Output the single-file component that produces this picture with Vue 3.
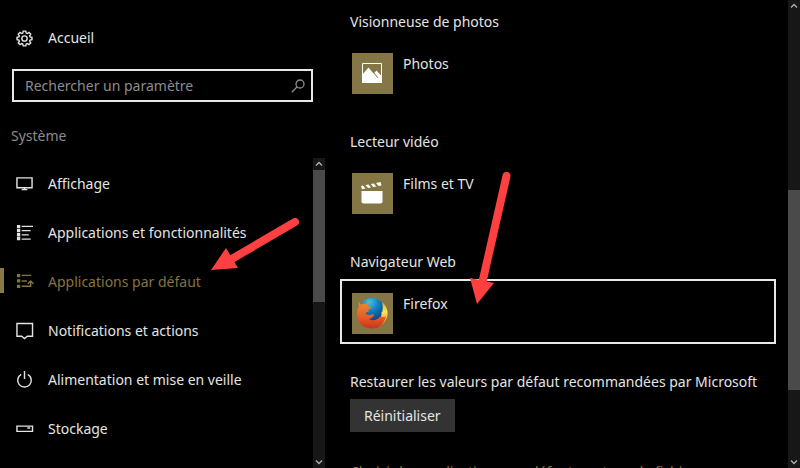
<template>
  <div class="settings">
    <aside class="sidebar">
      <a class="home" href="#accueil">
        <svg class="icon" viewBox="0 0 18 18" aria-hidden="true">
          <path class="line" d="M7.6 1.2h2.8l.4 2 1.1.5 1.8-1.2 1.9 1.9-1.2 1.8.5 1.1 2 .4v2.6l-2 .4-.5 1.1 1.2 1.8-1.9 1.9-1.8-1.2-1.1.5-.4 2H7.6l-.4-2-1.1-.5-1.8 1.2-1.9-1.9 1.2-1.8-.5-1.1-2-.4V7.7l2-.4.5-1.1-1.2-1.8 1.9-1.9 1.8 1.2 1.1-.5z" />
          <circle class="line" cx="9" cy="9" r="2.8" />
        </svg>
        <span>Accueil</span>
      </a>

      <label class="search">
        <input type="search" placeholder="Rechercher un paramètre" aria-label="Rechercher un paramètre" />
        <svg class="search__icon" viewBox="0 0 14 14" aria-hidden="true">
          <circle cx="9" cy="5" r="4" />
          <path d="M6.2 7.8L.8 13.2" />
        </svg>
      </label>

      <h1 class="sidebar__title">Système</h1>

      <div class="sidebar__scroll">
        <nav class="nav">
          <a
            v-for="item in items"
            :key="item.id"
            :href="`#${item.id}`"
            class="nav__item"
            :class="{ 'nav__item--active': item.id === current }"
            @click.prevent="current = item.id"
          >
            <svg class="icon" viewBox="0 0 18 18" aria-hidden="true">
              <path v-if="item.fill" class="solid" :d="item.fill" />
              <path v-if="item.line" class="line" :d="item.line" />
            </svg>
            <span>{{ item.label }}</span>
          </a>
        </nav>
        <div class="scrollbar scrollbar--nav" aria-hidden="true">
          <svg class="scrollbar__arrow" viewBox="0 0 12 12"><path d="M3 7.5l3-3 3 3" /></svg>
          <div class="scrollbar__thumb"></div>
          <div class="scrollbar__rest"></div>
          <svg class="scrollbar__arrow" viewBox="0 0 12 12"><path d="M3 4.5l3 3 3-3" /></svg>
        </div>
      </div>
    </aside>

    <main class="content">
      <section v-for="app in apps" :key="app.name" class="group">
        <h2 class="group__title">{{ app.category }}</h2>
        <button type="button" class="app" :class="{ 'app--selected': app.name === 'Firefox' }">
          <span class="app__tile">
            <svg v-if="app.icon === 'photos'" viewBox="0 0 41 41" aria-hidden="true">
              <path class="tile-line" d="M10.5 10.5h19v19h-19z" />
              <path class="tile-fill" d="M10 22l6.5-7.5 5 6 3-3 5.5 6v6.5H10z" />
              <path class="tile-cut" d="M22 20l4 5" />
            </svg>
            <svg v-else-if="app.icon === 'films'" viewBox="0 0 41 41" aria-hidden="true">
              <path class="tile-fill" d="M9.5 18h21v10.5q0 2-2 2h-17q-2 0-2-2z" />
              <path class="tile-fill" d="M9 13l2-.4 2.5 3-3.5.7zM13.5 12l3-.6 2.5 3-3 .6zM18.8 11l3-.6 2.5 3-3 .6zM24 10l4.5-1 1 3.4-3 .6z" />
            </svg>
            <svg v-else viewBox="0 0 41 41" aria-hidden="true">
              <defs>
                <radialGradient id="globe" cx="40%" cy="15%" r="85%">
                  <stop offset="0" stop-color="#37c5ee" />
                  <stop offset=".5" stop-color="#0b72b9" />
                  <stop offset="1" stop-color="#123466" />
                </radialGradient>
                <linearGradient id="fox" x1="0" y1="0" x2="0" y2="1">
                  <stop offset="0" stop-color="#e98a30" />
                  <stop offset=".6" stop-color="#e85a24" />
                  <stop offset="1" stop-color="#c8321c" />
                </linearGradient>
                <linearGradient id="flame" x1="0" y1="0" x2="0" y2="1">
                  <stop offset="0" stop-color="#d9a53a" />
                  <stop offset=".4" stop-color="#ffe95a" />
                  <stop offset="1" stop-color="#f0701f" />
                </linearGradient>
              </defs>
              <circle cx="20" cy="18" r="13" fill="url(#globe)" />
              <path fill="url(#flame)" d="M30 9c4 3.5 6 7.5 5.5 12.5-.5 6-4.5 10.500-9 12.500l-4-5c6-1.500 7.500-6 7-10.500l.8.8c.5-4 .7-7-.3-10.300z" />
              <path fill="url(#fox)" d="M7 9l1.5 2.5c1.7-.8 3.7-.8 5.2-.3 1-1.300 2.200-2.200 3.700-2.300-1.200 1.200-1.500 2.600-1.200 4 1 .5 2.700.4 3.400.8.300 1.300-2.200 2.200-3.200 3.100l.3 2.400c-1.200-.5-2.500 0-3 .9 1 2.400 3.800 2 6.800 1.200 1.200-.2 2 .7 1.500 1.400-1.500 1.300-2.700 2.800-5 3.200 3.500 2.500 8.300 1.300 10.900-2.200 1-.5 4 1 6-.5-1.500 7.500-6.800 12.300-13.500 12.300C11 35.500 5 29.500 5 21.500c0-4 .6-6.500 2-8.500-.6-1.300-.5-2.500 0-4z" />
            </svg>
          </span>
          <span class="app__name">{{ app.name }}</span>
        </button>
      </section>

      <section class="reset">
        <p class="reset__text">Restaurer les valeurs par défaut recommandées par Microsoft</p>
        <button type="button" class="reset__button">Réinitialiser</button>
      </section>

      <a class="more" href="#types">Choisir les applications par défaut par type de fichier</a>
    </main>

    <div class="scrollbar scrollbar--page" aria-hidden="true">
      <svg class="scrollbar__arrow" viewBox="0 0 12 12"><path d="M3 7.5l3-3 3 3" /></svg>
      <div class="scrollbar__rest"></div>
      <div class="scrollbar__thumb"></div>
      <div class="scrollbar__end"></div>
      <svg class="scrollbar__arrow" viewBox="0 0 12 12"><path d="M3 4.5l3 3 3-3" /></svg>
    </div>

    <!-- red pointers laid over the page -->
    <svg class="pointers" width="800" height="468" viewBox="0 0 800 468" aria-hidden="true">
      <path class="pointers__shaft" d="M295 222L230 260" />
      <path class="pointers__head" d="M211 270l15-22 12 20z" />
      <path class="pointers__shaft" d="M506.5 176L482 284" />
      <path class="pointers__head" d="M477 304l-7-26 24 5z" />
    </svg>
  </div>
</template>

<script setup>
import { ref } from 'vue'

const current = ref('defaut')

const items = [
  {
    id: 'affichage',
    label: 'Affichage',
    line: 'M1 3h16v10.5H1zM6 15.5h6M9 13v2',
  },
  {
    id: 'applications',
    label: 'Applications et fonctionnalités',
    fill: 'M1 1h3.5v3.5H1zM1 5.2h3.5v3.5H1zM1 9.4h3.5v3.5H1zM1 13.6h3.5v3.5H1z',
    line: 'M6 2.5h12M6 7h9.5M6 11.5h7.5M6 16h9.5',
  },
  {
    id: 'defaut',
    label: 'Applications par défaut',
    fill: 'M1 1h3.5v3.5H1zM1 6.5h3.5V10H1zM1 12.5h3.5V16H1z',
    line: 'M6 2.5h10M6 8.5h5.5M6 14h9.5V9M12.5 11.5l3-3 3 3',
  },
  {
    id: 'notifications',
    label: 'Notifications et actions',
    line: 'M1 1.5h16.5V15H12l-3 2.5L6 15H1z',
  },
  {
    id: 'alimentation',
    label: 'Alimentation et mise en veille',
    line: 'M9 0v8.5M5.5 3.5a7.2 7.2 0 1 0 7 0',
  },
  {
    id: 'stockage',
    label: 'Stockage',
    line: 'M1 6.5h16.5V12H1zM12 8.5h3',
  },
]

const apps = [
  { category: 'Visionneuse de photos', name: 'Photos', icon: 'photos' },
  { category: 'Lecteur vidéo', name: 'Films et TV', icon: 'films' },
  { category: 'Navigateur Web', name: 'Firefox', icon: 'firefox' },
]
</script>

<style>
body {
  background: #000;
}
</style>

<style scoped>
.settings {
  position: relative;
  display: flex;
  height: 100vh;
  overflow: hidden;
  background: #000;
  color: #e4e4e4;
  font-family: "Noto Sans", "Open Sans", sans-serif;
  font-size: 14px;
  line-height: 24px;
}

.settings * {
  box-sizing: border-box;
}

a {
  color: inherit;
  text-decoration: none;
}

button,
input {
  font: inherit;
  color: inherit;
}

/* Sidebar */
.sidebar {
  flex: 0 0 41%;
  display: flex;
  flex-direction: column;
}

.home {
  display: flex;
  align-items: center;
  gap: 15px;
  margin-top: 26px;
  padding-left: 16px;
}

.icon {
  flex: none;
  width: 17px;
  height: 17px;
  overflow: visible;
}
.line {
  fill: none;
  stroke: currentColor;
  stroke-width: 1.5;
}
.solid { fill: currentColor; }

.search {
  display: flex;
  align-items: center;
  height: 33px;
  margin: 19px 15px 0 12px;
  padding: 0 6px 0 11px;
  border: 2px solid #e8e8e8;
  color: #8c8c8c;
}
.search input {
  flex: 1;
  min-width: 0;
  padding: 0;
  border: 0;
  outline: 0;
  background: none;
}
.search input::placeholder {
  color: #8c8c8c;
  opacity: 1;
}
.search__icon {
  width: 14px;
  height: 14px;
  fill: none;
  stroke: currentColor;
  stroke-width: 1.3;
}

.sidebar__title {
  margin: 22px 0 0;
  padding-left: 11px;
  font-size: 14px;
  font-weight: 400;
  color: #8c8c8c;
}

.sidebar__scroll {
  flex: 1;
  min-height: 0;
  display: flex;
  margin: 10px 3px 0 0;
}

.nav {
  flex: 1;
  overflow: hidden;
}
.nav__item {
  position: relative;
  display: flex;
  align-items: center;
  gap: 15px;
  height: 49px;
  padding: 2px 0 0 16px;
}
.nav__item--active { color: #85743f; }
.nav__item--active::before {
  content: '';
  position: absolute;
  left: 0;
  top: 12px;
  width: 4px;
  height: 25px;
  background: #897947;
}

/* Scrollbars */
.scrollbar {
  flex: none;
  display: flex;
  flex-direction: column;
  width: 12px;
  background: #171717;
}
.scrollbar__arrow {
  flex: none;
  width: 12px;
  height: 12px;
  fill: none;
  stroke: #b0b0b0;
  stroke-width: 1.3;
}
.scrollbar__thumb { background: #4a4a4a; }
.scrollbar--nav .scrollbar__thumb { flex: 132; }
.scrollbar--nav .scrollbar__rest { flex: 154; }
.scrollbar--page .scrollbar__rest { flex: 178; }
.scrollbar--page .scrollbar__thumb { flex: 200; }
.scrollbar--page .scrollbar__end { flex: 66; }

/* Content */
.content {
  flex: 1;
  min-width: 0;
  padding: 10px 12px 0;
}

.group { margin-bottom: 26px; }
.group__title {
  margin: 0 0 5px;
  padding-left: 10px;
  font-size: 14px;
  font-weight: 400;
}

.app {
  display: flex;
  align-items: flex-start;
  gap: 10px;
  width: 100%;
  height: 65px;
  padding: 11px 10px;
  border: 2px solid transparent;
  background: none;
  text-align: left;
}
.app--selected { border-color: #e8e8e8; }
.app__tile {
  width: 41px;
  height: 41px;
  margin-top: 1px;
  background: #857645;
}
.app__tile svg { display: block; }
.tile-fill { fill: #fff; }
.tile-line {
  fill: none;
  stroke: #fff;
}
.tile-cut {
  fill: none;
  stroke: #857645;
}

.reset { padding-left: 10px; }
.reset__text { margin: 0 0 5px; }
.reset__button {
  height: 33px;
  padding: 0 14px;
  border: 0;
  background: #333;
}

.more {
  display: block;
  margin-top: 28px;
  padding-left: 10px;
  color: #85743f;
}

.pointers {
  position: absolute;
  left: 0;
  top: 0;
  pointer-events: none;
}
.pointers__shaft {
  fill: none;
  stroke: #ff4040;
  stroke-width: 8;
  stroke-linecap: round;
}
.pointers__head { fill: #ff4040; }
</style>
